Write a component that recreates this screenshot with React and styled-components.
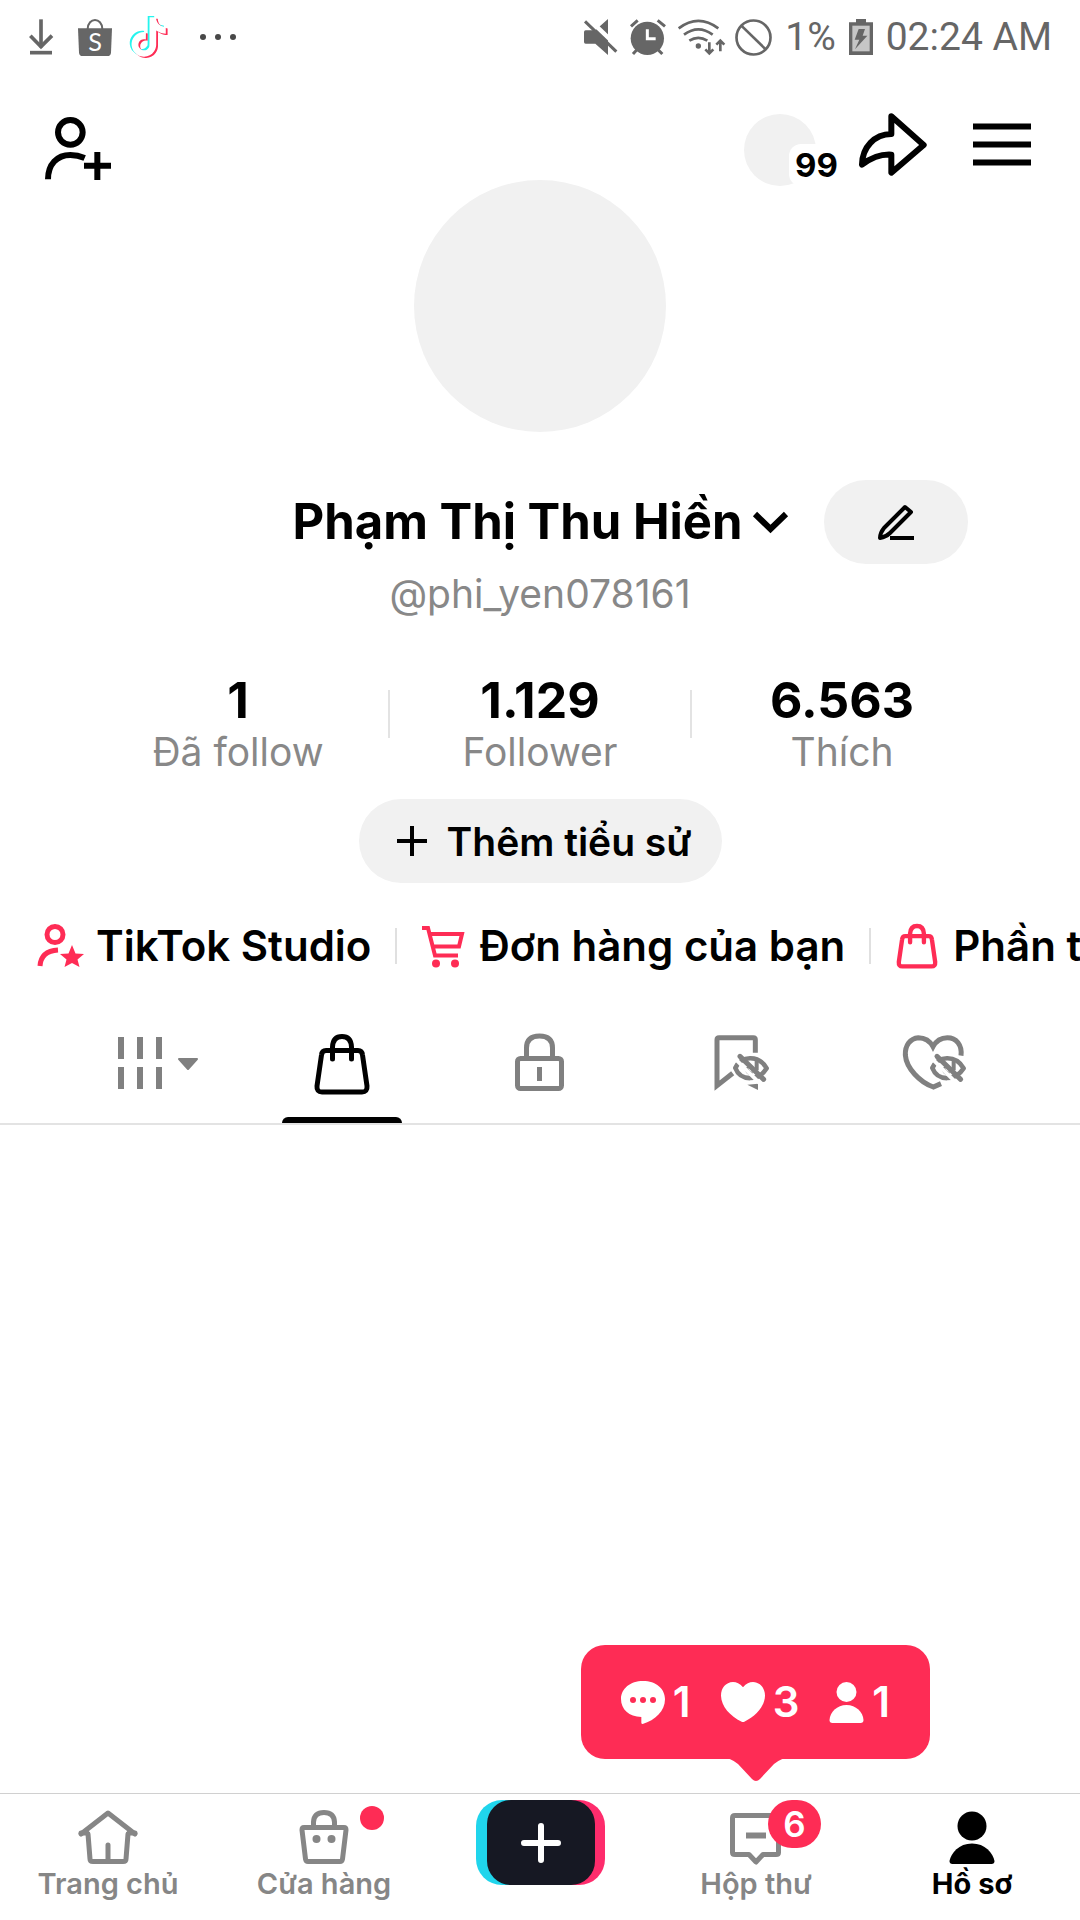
import React from "react";
import styled, { createGlobalStyle } from "styled-components";

const GlobalStyle = createGlobalStyle`
  *, *::before, *::after { box-sizing: border-box; }
  html, body { margin: 0; background: #fff; }
  body { font-family: Inter, "Noto Sans", sans-serif; color: #000; }
  button { font: inherit; color: inherit; border: 0; background: none; padding: 0; margin: 0; cursor: pointer; }
  a { color: inherit; text-decoration: none; }
  h1, p, dl, dd, dt { margin: 0; }
  svg { display: block; flex: none; overflow: visible; }
`;

const PINK = "#fe2c55";
const GREY = "#808080";

const Screen = styled.div`
  min-height: 100vh;
  display: flex;
  flex-direction: column;
  overflow-x: hidden;
`;

const StatusBar = styled.div`
  height: 72px;
  padding: 2px 28px 0 29px;
  display: flex;
  align-items: center;
  justify-content: space-between;
  color: #666;
  font-family: Roboto, sans-serif;
  font-size: 39px;
`;

const StatusGroup = styled.div`
  display: flex;
  align-items: center;
  gap: ${(p) => p.$gap}px;
`;

const Header = styled.header`
  display: flex;
  align-items: flex-start;
  justify-content: space-between;
  height: 108px;
  padding: 42px 49px 0 45px;
`;

const HeaderActions = styled.div`
  display: flex;
  align-items: flex-start;
`;

const IconButton = styled.button`
  display: flex;
  align-items: center;
  justify-content: center;
  height: ${(p) => p.$height || 60}px;
  margin-left: ${(p) => p.$space || 0}px;
`;

const Visitors = styled.button`
  position: relative;
  width: 72px;
  height: 72px;
  border-radius: 36px;
  background: #f1f1f1;
`;

const VisitorCount = styled.span`
  position: absolute;
  left: 45px;
  top: 30px;
  padding: 0 6px;
  border-radius: 12px;
  background: #fff;
  font-size: 33px;
  line-height: 42px;
  font-weight: 700;
`;

const Profile = styled.section`
  display: flex;
  flex-direction: column;
  align-items: center;
`;

const Avatar = styled.button`
  width: 252px;
  height: 252px;
  border-radius: 50%;
  background: #f1f1f1;
`;

const NameRow = styled.div`
  align-self: stretch;
  display: grid;
  grid-template-columns: 1fr auto 1fr;
  align-items: center;
  margin-top: 48px;
`;

const NameButton = styled.button`
  grid-column: 2;
  display: flex;
  align-items: center;
  gap: 10px;
`;

const Name = styled.h1`
  font-size: 49px;
  line-height: 60px;
  font-weight: 700;
  white-space: nowrap;
`;

const Pill = styled.button`
  display: flex;
  align-items: center;
  justify-content: center;
  gap: 20px;
  height: 84px;
  min-width: 144px;
  padding: 0 30px 0 38px;
  border-radius: 42px;
  background: #f1f1f1;
  font-size: 39px;
  font-weight: 600;
`;

const EditPill = styled(Pill)`
  justify-self: start;
  margin-left: 36px;
  padding: 0;
`;

const BioPill = styled(Pill)`
  margin-top: 23px;
`;

const Handle = styled.p`
  margin-top: 6px;
  color: #888;
  font-size: 39px;
  line-height: 48px;
`;

const Stats = styled.dl`
  align-self: stretch;
  display: grid;
  grid-template-columns: repeat(3, 1fr);
  margin-top: 54px;
  padding: 0 87px;
`;

const Stat = styled.div`
  position: relative;
  display: flex;
  flex-direction: column-reverse;
  align-items: center;

  & + &::before {
    content: "";
    position: absolute;
    left: -1px;
    top: 18px;
    width: 2px;
    height: 48px;
    background: #e3e3e3;
  }
`;

const StatValue = styled.dd`
  font-size: 50px;
  line-height: 56px;
  font-weight: 700;
`;

const StatLabel = styled.dt`
  color: #888;
  font-size: 39px;
  line-height: 48px;
`;

const Shortcuts = styled.nav`
  display: flex;
  align-items: center;
  height: 72px;
  margin-top: 27px;
  padding-left: 12px;
  overflow: hidden;
`;

const Shortcut = styled.a`
  position: relative;
  flex: none;
  display: flex;
  align-items: center;
  gap: 12px;
  padding: 0 24px;
  font-size: 42px;
  line-height: 54px;
  font-weight: 600;
  white-space: nowrap;

  & + &::before {
    content: "";
    position: absolute;
    left: 0;
    top: 9px;
    width: 2px;
    height: 36px;
    background: #e0e0e0;
  }
`;

const Tabs = styled.div`
  display: grid;
  grid-template-columns: repeat(5, 1fr);
  margin-top: 21px;
  padding: 0 45px;
  border-bottom: 2px solid #e3e3e3;
`;

const Tab = styled.button`
  position: relative;
  display: flex;
  align-items: center;
  justify-content: center;
  height: 120px;

  &[aria-selected="true"]::after {
    content: "";
    position: absolute;
    left: calc(50% - 60px);
    bottom: 0;
    width: 120px;
    height: 6px;
    border-radius: 6px 6px 0 0;
    background: #000;
  }
`;

const Content = styled.main`
  flex: 1;
`;

const BottomNav = styled.nav`
  display: grid;
  grid-template-columns: repeat(5, 1fr);
  height: 127px;
  border-top: 1px solid #d0d0d0;
`;

const NavItem = styled.a`
  position: relative;
  display: flex;
  flex-direction: column;
  align-items: center;
  padding-top: 12px;
  color: ${(p) => (p.$active ? "#000" : "#868686")};
  font-size: 29px;
  line-height: 36px;
  font-weight: ${(p) => (p.$active ? 700 : 600)};
  white-space: nowrap;
`;

const CreateButton = styled.button`
  justify-self: center;
  margin-top: 6px;
  width: 129px;
  height: 85px;
  padding: 0 10px 0 11px;
  border-radius: 26px;
  background: linear-gradient(90deg, #20d5ec 50%, #fe2c6c 50%);
`;

const CreateFace = styled.span`
  display: flex;
  align-items: center;
  justify-content: center;
  height: 85px;
  border-radius: 24px;
  background: #161823;
`;

const Dot = styled.span`
  position: absolute;
  left: calc(50% + 36px);
  top: 12px;
  width: 24px;
  height: 24px;
  border-radius: 12px;
  background: ${PINK};
`;

const Badge = styled.span`
  position: absolute;
  left: calc(50% + 12px);
  top: 6px;
  width: 53px;
  height: 48px;
  border-radius: 24px;
  background: ${PINK};
  color: #fff;
  font-size: 35px;
  line-height: 48px;
  font-weight: 600;
  text-align: center;
`;

const Tooltip = styled.span`
  position: absolute;
  left: 50%;
  bottom: 161px;
  margin-left: -175px;
  display: flex;
  align-items: center;
  justify-content: center;
  gap: 30px;
  width: 349px;
  height: 114px;
  border-radius: 24px;
  background: ${PINK};
  color: #fff;
  font-size: 42px;
  line-height: 48px;
  font-weight: 600;
`;

const TooltipTail = styled.svg`
  position: absolute;
  left: calc(50% - 35px);
  top: 112px;
`;

const Activity = styled.span`
  display: flex;
  align-items: center;
  gap: 8px;
`;

/* Shared line-drawing wrapper */
const Line = ({ w, h, box, color = "currentColor", stroke = 3, cap = "butt", children }) => (
  <svg width={w} height={h} viewBox={box || `0 0 ${w} ${h}`} fill="none" stroke={color}
    strokeWidth={stroke} strokeLinecap={cap} strokeLinejoin="round" aria-hidden="true">
    {children}
  </svg>
);

const DownloadIcon = () => (
  <Line w={31} h={36} box="87 57 93 108" stroke={11}>
    <path d="M123 58V142" />
    <path d="M91 107L123 140L156 107" strokeLinejoin="miter" />
    <path d="M90 158H156" />
  </Line>
);

const ShopeeIcon = () => (
  <Line w={34} h={37} box="234 56 102 111" stroke={6}>
    <path d="M234 84H336L333 157Q332 167 322 167H248Q238 167 237 157Z" fill="#666" stroke="none" />
    <path d="M263 86C264 50 306 50 307 86" />
    <text x="285" y="153" textAnchor="middle" fontFamily="Lato, sans-serif" fontSize="76" fill="#fff" stroke="none">S</text>
  </Line>
);

const NOTE =
  "M12.525.02c1.31-.02 2.61-.01 3.91-.02.08 1.53.63 3.09 1.75 4.17 1.12 1.11 2.7 1.62 4.24 1.79v4.03c-1.44-.05-2.89-.35-4.2-.97-.57-.26-1.1-.59-1.62-.93-.01 2.92.01 5.84-.02 8.75-.08 1.4-.54 2.79-1.35 3.94-1.31 1.92-3.58 3.17-5.91 3.21-1.43.08-2.86-.31-4.08-1.03-2.02-1.19-3.44-3.37-3.65-5.71-.02-.5-.03-1-.01-1.49.18-1.9 1.12-3.72 2.58-4.96 1.66-1.44 3.98-2.13 6.15-1.72.02 1.48-.04 2.96-.04 4.44-.99-.32-2.15-.23-3.02.37-.63.41-1.11 1.04-1.36 1.75-.21.51-.15 1.07-.14 1.61.24 1.64 1.82 3.02 3.5 2.87 1.12-.01 2.19-.66 2.77-1.61.19-.33.4-.67.41-1.06.1-1.79.06-3.57.07-5.36.01-4.03-.01-8.05.02-12.07z";

const TikTokIcon = () => (
  <svg width="38" height="42" viewBox="0.8 -0.8 22.8 25.6" aria-hidden="true">
    <path d={NOTE} fill="#25f4ee" transform="translate(-1.1 -.8)" />
    <path d={NOTE} fill={PINK} transform="translate(1.1 .8)" />
    <path d={NOTE} fill="#fff" />
  </svg>
);

const MoreDots = () => (
  <svg width="50" height="6" viewBox="0 0 50 6" fill="#484848" aria-hidden="true">
    <circle cx="17" cy="3" r="3" /><circle cx="32" cy="3" r="3" /><circle cx="47" cy="3" r="3" />
  </svg>
);

const MuteIcon = () => (
  <Line w={33} h={36} box="81 57 99 108" stroke={9}>
    <path d="M153 57V165L115 131H86Q81 131 81 126V96Q81 91 86 91H115Z" fill="currentColor" stroke="none" />
    <path d="M88 50L188 146" stroke="#fff" strokeWidth="13" />
    <path d="M84 64L178 155" />
  </Line>
);

const AlarmIcon = () => (
  <Line w={35} h={36} box="220 57 105 108" stroke={9}>
    <circle cx="272" cy="115" r="50" fill="currentColor" stroke="none" />
    <path d="M223 79L243 61M303 61L325 79M242 148L229 162M303 148L317 162" />
    <path d="M272 88V116H297" stroke="#fff" strokeLinejoin="miter" />
  </Line>
);

const WifiIcon = () => (
  <Line w={44} h={36} box="370 53 132 108" stroke={8}>
    <path d="M372 81Q431 36 491 81M388 100Q431 68 474 100M404 118Q431 101 458 118" />
    <circle cx="431" cy="134" r="8" fill="currentColor" stroke="none" />
    <path d="M464 123V156M452 144L464 156L476 144M497 150V118M485 130L497 118L509 130" strokeLinejoin="miter" />
  </Line>
);

const BanIcon = () => (
  <Line w={37} h={37} box="530 52 111 111" stroke={8}>
    <circle cx="585.5" cy="107.5" r="51" />
    <path d="M549 72L622 143" />
  </Line>
);

const BatteryIcon = () => (
  <svg width="24" height="36" viewBox="867 57 72 108" fill="currentColor" aria-hidden="true">
    <path d="M888 57H918V67H939V165H867V67H888Z" />
    <path d="M877 77H929V154H877Z" fill="#c6c6c6" />
    <path d="M896 87H915L908 107H922L885 148L898 119H884Z" />
  </svg>
);

const AddPersonIcon = () => (
  <Line w={66} h={63} box="0 0 198 189" stroke={18}>
    <circle cx="76" cy="46" r="37" />
    <path d="M9 187C9 142 36 114 76 114C92 114 105 117 119 123" />
    <path d="M157 105V189M117 146H198" />
  </Line>
);

const ShareIcon = () => (
  <Line w={68} h={63} box="0 0 204 189" stroke={18}>
    <path d="M97 10L194 96L97 179V125C64 123 37 134 9 155C10 102 46 64 97 63Z" />
  </Line>
);

const MenuIcon = () => (
  <Line w={58} h={43} stroke={6}>
    <path d="M0 3.500H58M0 21.500H58M0 39.500H58" />
  </Line>
);

const ChevronIcon = () => (
  <Line w={35} h={21} stroke={6}><path d="M2 2L17.500 17L33 2" strokeLinejoin="miter" /></Line>
);

const PencilIcon = () => (
  <Line w={38} h={36} stroke={4}>
    <path d="M28 3L34 8L13 29Q9 33 3 34Q3 29 7 24Z" />
    <path d="M13 34H37" />
  </Line>
);

const PlusIcon = () => (
  <Line w={30} h={30} stroke={4}><path d="M15 0V30M0 15H30" /></Line>
);

const StudioIcon = () => (
  <Line w={48} h={48} color={PINK} stroke={5}>
    <circle cx="19" cy="12.500" r="8" />
    <path d="M4 44Q5 29 22 28" />
    <path d="M36 23L39.500 31.500L48 32L41.500 37.500L43.500 45L36 41L28.500 45L30.500 37.500L24 32L32.500 31.500Z" fill={PINK} stroke="none" />
  </Line>
);

const CartIcon = () => (
  <Line w={48} h={48} color={PINK} stroke={4}>
    <path d="M3 6H9L16 33.500H39M11 12H43L40 24.500H14" strokeLinejoin="miter" />
    <circle cx="17" cy="41.500" r="4" fill={PINK} stroke="none" />
    <circle cx="36" cy="41.500" r="4" fill={PINK} stroke="none" />
  </Line>
);

const BagIcon = ({ size, box, stroke, color }) => (
  <Line w={size} h={size} box={box} color={color} stroke={stroke} cap="round">
    <path d="M20 23.500H52Q56 23.500 56.500 28L61 59Q61.500 65 56 65H16Q10.500 65 11 59L15.500 28Q16 23.500 20 23.500Z" />
    <path d="M26.500 32V20Q27 9.500 36 9.500Q45 9.500 45.500 20V32" />
  </Line>
);

const GridIcon = () => (
  <Line w={72} h={72} color={GREY} stroke={6}>
    <path d="M13 10V32M32 10V32M51 10V32M13 40V62M32 40V62M51 40V62" />
    <path d="M71 32H89L80 42Z" fill={GREY} strokeWidth="2" />
  </Line>
);

const LockIcon = () => (
  <Line w={72} h={72} color={GREY} stroke={5}>
    <rect x="13.500" y="31.500" width="44" height="30" rx="3" />
    <path d="M22.500 31V21Q22.500 9 35.500 9Q48.500 9 48.500 21V31M35.500 40V54" />
  </Line>
);

const HiddenEye = () => (
  <>
    <path d="M106 129C122 92 176 88 200 130C176 168 122 170 106 129Z" strokeWidth="14" />
    <path d="M139 126Q139 143 157 147M170 104V136" strokeWidth="12" />
    <path d="M108 104L186 182" stroke="#fff" strokeWidth="11" />
    <path d="M120 94L191 163" strokeLinecap="round" />
  </>
);

const SavedIcon = () => (
  <Line w={72} h={72} box="6 6 216 216" color={GREY} stroke={15}>
    <path d="M166 83V44Q166 38 160 38H57Q51 38 51 44V182L98 145" strokeLinejoin="miter" />
    <path d="M142 179L174 176V195Z" fill={GREY} stroke="none" />
    <HiddenEye />
  </Line>
);

const LikedIcon = () => (
  <Line w={72} h={72} box="15 6 216 216" color={GREY} stroke={15}>
    <path d="M198 92C202 60 184 38 157 38C135 38 122 50 114 65C106 50 92 38 70 38C45 40 30 62 31 90C34 130 75 172 115 186L138 176" strokeLinejoin="miter" />
    <g transform="translate(6 0)"><HiddenEye /></g>
  </Line>
);

const HomeIcon = () => (
  <Line w={60} h={60} stroke={5} cap="round">
    <path d="M3 28L30 7L57 28M10 28L12 53Q12 55.500 15 55.500H45Q48 55.500 48 53L50 28M30 39V54" />
    <path d="M3 27H9M51 27H57" />
  </Line>
);

const ShopIcon = () => (
  <Line w={60} h={60} stroke={5}>
    <path d="M10 21.500H50Q52 21.500 52 24L48.500 53Q48 55.500 46 55.500H14Q12 55.500 11.500 53L8 24Q8 21.500 10 21.500Z" />
    <path d="M19.500 21V16Q20 6.500 30 6.500Q40 6.500 40.500 16V21" />
    <circle cx="22.500" cy="33" r="4" fill="currentColor" stroke="none" />
    <circle cx="37.500" cy="33" r="4" fill="currentColor" stroke="none" />
  </Line>
);

const InboxIcon = () => (
  <Line w={60} h={60} stroke={5}>
    <path d="M9 9.500H50Q52.500 9.500 52.500 12V46.500Q52.500 48.500 50 48.500H37L30 56L23 48.500H9Q6.500 48.500 6.500 46.500V12Q6.500 9.500 9 9.500Z" />
    <path d="M20 29.500H40" strokeWidth="6" />
  </Line>
);

const FollowerIcon = () => (
  <svg width="35" height="41" viewBox="0 0 35 41" fill="currentColor" aria-hidden="true">
    <circle cx="17.500" cy="10" r="10" />
    <path d="M17.500 23C27 23 34 30 34.500 38Q34.500 41 31.500 41H3.500Q0.500 41 0.500 38C1 30 8 23 17.500 23Z" />
  </svg>
);

const ProfileIcon = () => (
  <svg width="60" height="60" viewBox="0 0 60 60" fill="currentColor" aria-hidden="true">
    <circle cx="30" cy="20" r="14.500" />
    <path d="M30 37.500C43 37.500 51 47 52.500 55Q52.500 58 49.500 58H10.500Q7.500 58 7.500 55C9 47 17 37.500 30 37.500Z" />
  </svg>
);

const CommentIcon = () => (
  <svg width="44" height="43" viewBox="0 0 132 129" aria-hidden="true">
    <path d="M66 0C105 0 132 23 132 55C132 90 103 118 65 129Q61 129 61 125V108C24 107 0 85 0 54C0 23 28 0 66 0Z" fill="#fff" />
    <g fill={PINK}><circle cx="36" cy="57" r="9" /><circle cx="66" cy="57" r="9" /><circle cx="96" cy="57" r="9" /></g>
  </svg>
);

const HeartIcon = () => (
  <svg width="44" height="40" viewBox="0 0 132 120" fill="#fff" aria-hidden="true">
    <path d="M66 16C76 4 85 0 96 0C118 1 132 18 132 41C131 73 105 102 70 119Q66 121 62 119C27 102 1 73 0 41C0 18 14 1 36 0C47 0 56 4 66 16Z" />
  </svg>
);

export default function App() {
  return (
    <Screen>
      <GlobalStyle />
      <StatusBar>
        <StatusGroup $gap={18}>
          <DownloadIcon /><ShopeeIcon /><TikTokIcon /><MoreDots />
        </StatusGroup>
        <StatusGroup $gap={13}>
          <MuteIcon /><AlarmIcon /><WifiIcon /><BanIcon />
          <span>1%</span>
          <BatteryIcon />
          <span>02:24 AM</span>
        </StatusGroup>
      </StatusBar>

      <Header>
        <IconButton $height={68} aria-label="Thêm bạn"><AddPersonIcon /></IconButton>
        <HeaderActions>
          <Visitors><VisitorCount>99</VisitorCount></Visitors>
          <IconButton $space={43} aria-label="Chia sẻ"><ShareIcon /></IconButton>
          <IconButton $space={46} aria-label="Menu"><MenuIcon /></IconButton>
        </HeaderActions>
      </Header>

      <Profile>
        <Avatar aria-label="Ảnh đại diện" />
        <NameRow>
          <NameButton>
            <Name>Phạm Thị Thu Hiền</Name>
            <ChevronIcon />
          </NameButton>
          <EditPill aria-label="Sửa hồ sơ"><PencilIcon /></EditPill>
        </NameRow>
        <Handle>@phi_yen078161</Handle>
        <Stats>
          <Stat><StatLabel>Đã follow</StatLabel><StatValue>1</StatValue></Stat>
          <Stat><StatLabel>Follower</StatLabel><StatValue>1.129</StatValue></Stat>
          <Stat><StatLabel>Thích</StatLabel><StatValue>6.563</StatValue></Stat>
        </Stats>
        <BioPill><PlusIcon />Thêm tiểu sử</BioPill>
      </Profile>

      <Shortcuts>
        <Shortcut href="#studio"><StudioIcon />TikTok Studio</Shortcut>
        <Shortcut href="#orders"><CartIcon />Đơn hàng của bạn</Shortcut>
        <Shortcut href="#showcase"><BagIcon size={48} box="3 4 66 66" stroke={6} color={PINK} />Phần trưng bày</Shortcut>
      </Shortcuts>

      <Tabs role="tablist">
        <Tab role="tab" aria-selected="false" aria-label="Video"><GridIcon /></Tab>
        <Tab role="tab" aria-selected="true" aria-label="Cửa hàng"><BagIcon size={72} stroke={5} /></Tab>
        <Tab role="tab" aria-selected="false" aria-label="Riêng tư"><LockIcon /></Tab>
        <Tab role="tab" aria-selected="false" aria-label="Đã lưu"><SavedIcon /></Tab>
        <Tab role="tab" aria-selected="false" aria-label="Đã thích"><LikedIcon /></Tab>
      </Tabs>

      <Content />

      <BottomNav>
        <NavItem href="#home"><HomeIcon />Trang chủ</NavItem>
        <NavItem href="#shop"><ShopIcon />Cửa hàng<Dot /></NavItem>
        <CreateButton aria-label="Tạo">
          <CreateFace><svg width="40" height="40" viewBox="0 0 40 40" stroke="#fff" strokeWidth="6" strokeLinecap="round" aria-hidden="true"><path d="M20 3V37M3 20H37" /></svg></CreateFace>
        </CreateButton>
        <NavItem href="#inbox">
          <InboxIcon />Hộp thư
          <Badge>6</Badge>
          <Tooltip>
            <Activity><CommentIcon />1</Activity>
            <Activity><HeartIcon />3</Activity>
            <Activity><FollowerIcon />1</Activity>
            <TooltipTail width="70" height="26" viewBox="0 0 70 26" fill={PINK} aria-hidden="true">
              <path d="M0 0H70Q60 1 53 7L39 22Q35 26 31 22L17 7Q10 1 0 0Z" />
            </TooltipTail>
          </Tooltip>
        </NavItem>
        <NavItem href="#profile" $active aria-current="page"><ProfileIcon />Hồ sơ</NavItem>
      </BottomNav>
    </Screen>
  );
}
